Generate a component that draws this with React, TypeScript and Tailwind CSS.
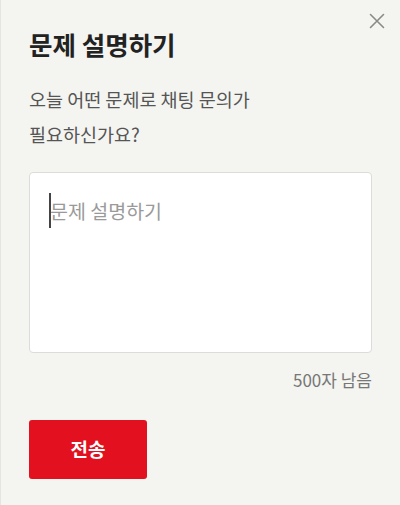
import React from "react";

export default function App() {
  const font = { fontFamily: '"Noto Sans CJK KR", "Noto Sans", sans-serif' };
  return (
    <div
      className="relative w-[400px] h-[505px] bg-[#f4f4f0] border-l border-[#e4e4e0] pl-[28px] pr-[28px] overflow-hidden"
      style={font}
    >
      <button className="absolute right-[14px] top-[12px] w-[18px] h-[18px] flex items-center justify-center" aria-label="닫기">
        <svg width="16" height="16" viewBox="0 0 16 16" fill="none">
          <path d="M1.5 1.5 L14.5 14.5 M14.5 1.5 L1.5 14.5" stroke="#8a8a88" strokeWidth="1.6" strokeLinecap="round" />
        </svg>
      </button>
      <h1 className="pt-[27px] text-[25.5px] leading-[33px] font-bold text-[#222222]">
        문제 설명하기
      </h1>
      <p className="mt-[22px] text-[18.5px] leading-[35px] text-[#555555]">
        오늘 어떤 문제로 채팅 문의가
        <br />
        필요하신가요?
      </p>
      <div className="relative mt-[20px] h-[181px] w-[343px] bg-white border border-[#dcdcd8] rounded-[4px]">
        <textarea
          className="w-full h-full resize-none bg-transparent outline-none pl-[20px] pr-[20px] pt-[24px] text-[19.5px] leading-[28px] text-[#333] placeholder:text-[#9a9a9a]"
          placeholder="문제 설명하기"
          style={font}
        />
        <div className="absolute left-[19px] top-[20px] w-[2px] h-[35px] bg-[#444444]" />
      </div>
      <div className="mt-[17px] w-[343px] text-right text-[17px] leading-[20px] text-[#777777]">
        500자 남음
      </div>
      <button className="mt-[30px] w-[118px] h-[59px] bg-[#e3111f] rounded-[3px] text-white text-[19px] font-bold flex items-center justify-center">
        전송
      </button>
    </div>
  );
}
